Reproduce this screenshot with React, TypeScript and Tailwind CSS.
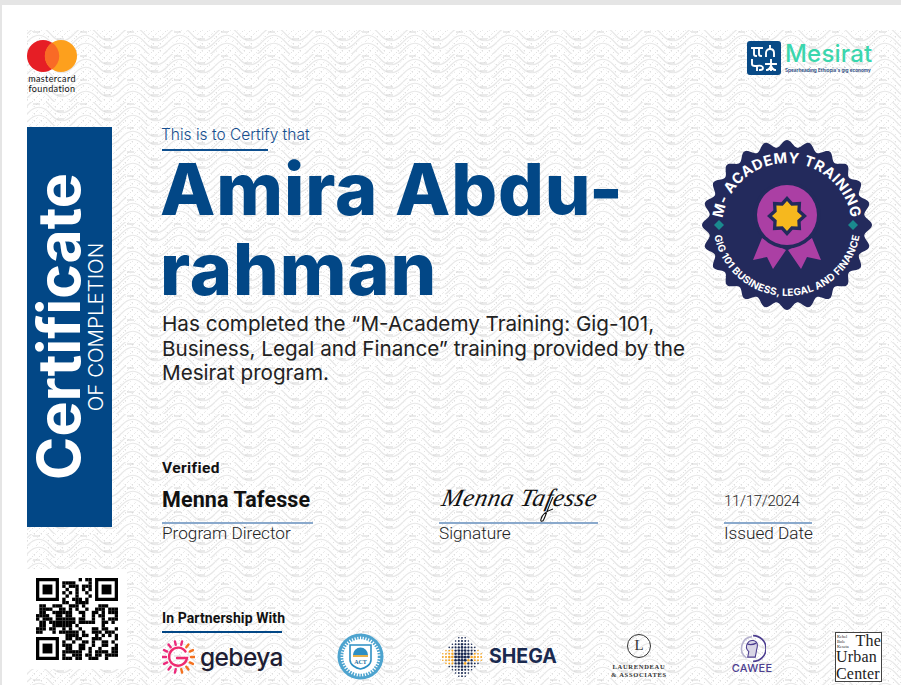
import React from "react";

const navy = "#232a5c";

function WavePattern() {
  const ys = [4, 12, 20];
  return (
    <svg className="absolute left-[25px] top-[25px]" width="874" height="655" aria-hidden="true">
      <defs>
        <pattern id="hatch" width="7" height="7" patternUnits="userSpaceOnUse">
          <path d="M0 7L7 0" stroke="#c6c6c6" strokeWidth="0.8" strokeDasharray="1 2.5" />
          <path d="M0 0L7 7" stroke="#d8d8d8" strokeWidth="0.7" strokeDasharray="1 3" />
        </pattern>
        <pattern id="wave" width="47" height="24" patternUnits="userSpaceOnUse">
          {ys.map((y) => (
            <path key={y} d={`M0 ${y} C8 ${y - 9} 16 ${y - 9} 23.5 ${y} S39 ${y + 9} 47 ${y}`} fill="none" stroke="#fff" strokeWidth="3.2" />
          ))}
          {ys.map((y) => (
            <path key={y} d={`M0 ${y} C8 ${y - 9} 16 ${y - 9} 23.5 ${y} S39 ${y + 9} 47 ${y}`} fill="none" stroke="#e8e8e8" strokeWidth="1.2" />
          ))}
          <path d="M30 9h7M30 17h7M6 2h7" stroke="#d0d0d0" strokeWidth="0.9" />
        </pattern>
      </defs>
      <rect width="874" height="655" fill="url(#hatch)" />
      <rect width="874" height="655" fill="url(#wave)" />
    </svg>
  );
}

function MastercardLogo() {
  return (
    <div className="flex w-[50px] flex-col items-center">
      <svg width="50" height="32" viewBox="0 0 50 32">
        <circle cx="16" cy="16" r="16" fill="#e61e25" />
        <circle cx="34" cy="16" r="16" fill="#fda01d" />
        <path d="M25 2.6a16 16 0 0 1 0 26.8a16 16 0 0 1 0-26.8z" fill="#f96a26" />
      </svg>
      <div className="mt-[2px] text-center font-['Lato'] text-[9px] font-normal leading-[10px] tracking-[0.4px] text-[#111]">
        mastercard
        <br />
        foundation
      </div>
    </div>
  );
}

function MesiratLogo() {
  return (
    <div className="flex items-start gap-[4px] pt-[1px]">
      <svg width="34" height="34" viewBox="0 0 34 34">
        <rect width="34" height="34" rx="3" fill="#084a86" />
        <g fill="none" stroke="#fff" strokeWidth="1.9" strokeLinecap="square">
          <path d="M5 7h10M7 7v6c0 2 1 2 2 2M12 7v6c0 2 1 2 2 2" />
          <path d="M23 5v3M19 15v-3c0-3 2-4 4-4s4 1 4 4v3" />
          <path d="M5 19v4c0 2 2 2 3 2h2v4M10 25c3-1 6 0 6 2s-2 2-3 2" />
          <path d="M19 23h10M24 19v10M20 29c2 0 3-2 4-4M28 29c-2 0-3-2-4-4" />
        </g>
      </svg>
      <div className="flex w-[87px] flex-col">
        <span className="font-['Inter'] text-[24px] font-medium leading-[26px] tracking-[0.2px] text-[#3bd6ad]">Mesirat</span>
        <span className="whitespace-nowrap font-['Inter'] text-[4.700px] font-semibold leading-[6px] text-[#17407a]">
          Spearheading Ethiopia's gig economy
        </span>
      </div>
    </div>
  );
}

function Badge() {
  const pts: string[] = [];
  for (let i = 0; i < 480; i++) {
    const t = (i / 480) * Math.PI * 2;
    const r = 81.5 + 3.5 * Math.cos(24 * t);
    pts.push(`${(85 + r * Math.cos(t)).toFixed(2)},${(85 + r * Math.sin(t)).toFixed(2)}`);
  }
  const star = (R: number, ratio: number) => {
    const out: string[] = [];
    for (let i = 0; i < 16; i++) {
      const a = (i / 16) * Math.PI * 2 - Math.PI / 2;
      const r = i % 2 === 0 ? R : R * ratio;
      out.push(`${(85 + r * Math.cos(a)).toFixed(2)},${(76 + r * Math.sin(a)).toFixed(2)}`);
    }
    return out.join(" ");
  };
  return (
    <svg width="170" height="170" viewBox="0 0 170 170" className="shrink-0">
      <polygon points={pts.join(" ")} fill={navy} />
      <polygon points="60,98 84,110 71,129 65,117 51,120" fill="#ab3fa4" />
      <polygon points="110,98 86,110 99,129 105,117 119,120" fill="#ab3fa4" />
      <circle cx="85" cy="75" r="33.5" fill={navy} />
      <circle cx="85" cy="75" r="30" fill="#ab3fa4" />
      <polygon points={star(20, 0.74)} fill={navy} />
      <polygon points={star(15, 0.74)} fill="#f6b81e" />
      <path d="M79 85l5-5 5 5-5 5z" fill="#1a8a8e" transform="translate(-67 0)" />
      <path d="M79 85l5-5 5 5-5 5z" fill="#1a8a8e" transform="translate(67 0)" />
      <defs>
        <path id="arcTop" d="M20 88A65 65 0 1 1 150 88" />
        <path id="arcBottom" d="M11 82A74 74 0 0 0 159 82" />
      </defs>
      <text fill="#fff" fontSize="14.500" fontWeight="700" letterSpacing="0.6" className="font-['Inter']">
        <textPath href="#arcTop" startOffset="50%" textAnchor="middle">M- ACADEMY TRAINING</textPath>
      </text>
      <text fill="#fff" fontSize="10" fontWeight="700" letterSpacing="0.2" className="font-['Inter']">
        <textPath href="#arcBottom" startOffset="50%" textAnchor="middle">GIG 101 BUSINESS, LEGAL AND FINANCE</textPath>
      </text>
    </svg>
  );
}

function SignBlock({ width, top, label }: { width: string; top: React.ReactNode; label: string }) {
  return (
    <div className={`flex flex-col ${width}`}>
      <div className="relative flex h-[32px] items-end whitespace-nowrap">{top}</div>
      <div className="mt-[9px] h-[2px] w-full bg-[#8aa9cc]" />
      <div className="mt-[-1px] whitespace-nowrap text-[17.200px] font-light leading-[20px] text-[#222]">{label}</div>
    </div>
  );
}

function QrCode() {
  const n = 25;
  const cells: [number, number][] = [];
  let s = 20241117;
  const rnd = () => {
    s = (s * 1103515245 + 12345) & 0x7fffffff;
    return (s >> 12) % 100;
  };
  const inFinder = (x: number, y: number) => (x < 8 && y < 8) || (x >= n - 8 && y < 8) || (x < 8 && y >= n - 8);
  for (let y = 0; y < n; y++) {
    for (let x = 0; x < n; x++) {
      if (!inFinder(x, y) && rnd() < 56) cells.push([x, y]);
    }
  }
  const finder = (x: number, y: number) => (
    <g key={`${x}-${y}`}>
      <path d={`M${x} ${y}h7v7h-7zM${x + 1} ${y + 1}v5h5v-5z`} fillRule="evenodd" />
      <rect x={x + 2} y={y + 2} width="3" height="3" />
    </g>
  );
  return (
    <div className="flex h-[100px] w-[100px] shrink-0 items-center justify-center bg-white">
      <svg width="82" height="82" viewBox="0 0 25 25" fill="#000">
        {cells.map(([x, y]) => (
          <rect key={`${x}:${y}`} x={x} y={y} width="1.02" height="1.02" />
        ))}
        {finder(0, 0)}
        {finder(18, 0)}
        {finder(0, 18)}
      </svg>
    </div>
  );
}

function GebeyaLogo() {
  const rays = Array.from({ length: 14 }, (_, i) => (i / 14) * Math.PI * 2);
  return (
    <div className="flex w-[121px] items-center gap-[5px]">
      <svg width="33" height="34" viewBox="0 0 33 34" className="shrink-0">
        <g strokeWidth="2.4" strokeLinecap="round" fill="none">
          {rays.map((a, i) => (
            <line key={i} x1={16.5 + 12.5 * Math.cos(a)} y1={17 + 12.5 * Math.sin(a)} x2={16.5 + 16 * Math.cos(a)} y2={17 + 16 * Math.sin(a)} stroke={i < 4 || i > 11 ? "#f4711f" : "#ec2a7c"} />
          ))}
          <path d="M23.5 11.5A9 9 0 1 0 25 18H15" stroke="#ef2b70" />
        </g>
      </svg>
      <span className="font-['Inter'] text-[24.500px] font-medium leading-none tracking-[-0.6px] text-[#201d33]">gebeya</span>
    </div>
  );
}

function ActSeal() {
  return (
    <svg width="47" height="47" viewBox="0 0 47 47" className="ml-[54px] shrink-0">
      <circle cx="23.5" cy="23.5" r="23" fill="#4ea4cf" />
      <circle cx="23.5" cy="23.5" r="20" fill="#fff" />
      <circle cx="23.5" cy="23.5" r="19" fill="none" stroke="#4ea4cf" strokeWidth="3.5" strokeDasharray="1.6 1.2" />
      <circle cx="23.5" cy="23.5" r="15" fill="#fff" />
      <path d="M13 12h21v15c0 5-6 8-10.500 9C19 35 13 32 13 27z" fill="#fff" stroke="#2d8fc4" strokeWidth="1.6" />
      <path d="M16 22a7.500 7.500 0 0 1 15 0z" fill="#2d8fc4" />
      <rect x="16" y="22" width="15" height="2" fill="#e3b04b" />
      <text x="23.5" y="31" textAnchor="middle" fontSize="6" fontWeight="700" fill="#1f6f9e" className="font-['Liberation_Serif']">ACT</text>
    </svg>
  );
}

function ShegaLogo() {
  const dots: React.ReactNode[] = [];
  for (let y = -6; y <= 6; y++) {
    for (let x = -6; x <= 6; x++) {
      const d = Math.abs(x) + Math.abs(y);
      if (d > 7) continue;
      const orange = (x + y === 3 && x > 0) || (x < -2 && Math.abs(y) < 3) || (x > 3 && y > -2 && y < 2);
      dots.push(
        <circle key={`${x}_${y}`} cx={23 + x * 3.2} cy={23 + y * 3.2} r={Math.max(0.6, 1.7 - d * 0.13)} fill={orange ? "#f5a623" : "#1b2a52"} />
      );
    }
  }
  return (
    <div className="ml-[55px] flex w-[116px] items-center gap-[4px]">
      <svg width="46" height="46" viewBox="0 0 46 46" className="shrink-0">{dots}</svg>
      <span className="font-['Inter'] text-[19.500px] font-bold leading-none text-[#1a2a4f]">SHEGA</span>
    </div>
  );
}

function LaurendeauLogo() {
  return (
    <div className="ml-[56px] flex w-[56px] flex-col items-center self-start pt-[2px]">
      <div className="flex h-[24px] w-[24px] items-center justify-center rounded-full border border-[#333] font-['Liberation_Serif'] text-[15px] leading-none text-[#333]">L</div>
      <div className="mt-[5px] whitespace-nowrap text-center font-['Liberation_Serif'] text-[6.500px] font-bold leading-[8px] tracking-[0.7px] text-[#333]">
        LAURENDEAU
        <br />
        &amp; ASSOCIATES
      </div>
    </div>
  );
}

function CaweeLogo() {
  return (
    <div className="ml-[64px] flex w-[42px] flex-col items-center self-start pt-[2px]">
      <svg width="28" height="29" viewBox="0 0 26 26">
        <path d="M14 1a12 12 0 0 1 0 24" fill="none" stroke="#4c3d8f" strokeWidth="1.5" />
        <path d="M13 2a11 11 0 0 0-5 20" fill="none" stroke="#b7b3cf" strokeWidth="1.5" />
        <path d="M9 8c2-4 9-3 9 2 0 3-1 4-1 6l-1 5H9l1-5c-2-2-3-5-1-8z" fill="#d9d6e6" stroke="#4c3d8f" strokeWidth="1" />
        <path d="M9 9c3 1 6 0 8-1" fill="none" stroke="#4c3d8f" strokeWidth="1.200" />
      </svg>
      <span className="font-['Inter'] text-[11px] font-medium leading-[11px] tracking-[0.3px] text-[#4c3d8f]">CAWEE</span>
    </div>
  );
}

function UrbanCenterLogo() {
  return (
    <div className="ml-[62px] flex h-[50px] w-[47px] shrink-0 flex-col overflow-hidden border border-[#444] bg-white font-['Liberation_Serif'] text-[16px] leading-[16.500px] tracking-[0.2px] text-[#222]">
      <div className="flex items-center">
        <span className="w-[22px] pl-[1px] text-[4.300px] leading-[5px] tracking-normal">Kebel Bole Keseta</span>
        <span>The</span>
      </div>
      <span>Urban</span>
      <span>Center</span>
    </div>
  );
}

export default function App() {
  return (
    <div className="h-[685px] w-[901px] overflow-hidden bg-[#e5e5e5] pl-[2px] pt-[5px] font-['Inter']">
      <div className="relative flex h-[680px] w-[899px] flex-col bg-white pl-[25px] pr-[29px] pt-[35px]">
        <WavePattern />
        <div className="relative flex h-[52px] items-start justify-between">
          <MastercardLogo />
          <MesiratLogo />
        </div>

        <div className="relative mt-[35px] flex items-start">
          <div className="flex h-[400px] w-[85px] shrink-0 items-center justify-center bg-[#024786] text-white">
            <div className="rotate-180 text-center [writing-mode:vertical-rl]">
              <div className="font-['Inter'] text-[59px] font-bold leading-[52px]">Certificate</div>
              <div className="font-['Inter'] text-[20.500px] font-light leading-[22px]">OF COMPLETION</div>
            </div>
          </div>

          <div className="ml-[50px] flex flex-1 flex-col">
            <div className="flex">
              <div className="w-[530px]">
                <div className="ml-[-1px] text-[15.500px] font-light leading-[15px] text-[#164f90]">This is to Certify that</div>
                <div className="mt-[7px] h-[2px] w-[106px] bg-[#0d4f8f]" />
                <h1 className="ml-[-2px] mt-[-2px] font-['Inter'] text-[72px] font-extrabold leading-[80px] tracking-[0.9px] text-[#024786]">
                  Amira Abdu-
                  <br />
                  rahman
                </h1>
                <p className="mt-[3px] whitespace-nowrap text-[20.650px] font-normal leading-[24.600px] text-[#222]">
                  Has completed the “M-Academy Training: Gig-101,
                  <br />
                  Business, Legal and Finance” training provided by the
                  <br />
                  Mesirat program.
                </p>
              </div>
              <div className="ml-[10px] mt-[13px]">
                <Badge />
              </div>
            </div>

            <div className="mt-[73px] font-['Roboto'] text-[15.500px] font-bold leading-[18px] tracking-[0.4px] text-[#111]">Verified</div>
            <div className="mt-[4px] flex font-['Roboto']">
              <div className="w-[277px]">
                <SignBlock width="w-[151px]" label="Program Director" top={<span className="font-['Roboto'] text-[21.500px] font-bold leading-[26px] tracking-[0.1px] text-[#111]">Menna Tafesse</span>} />
              </div>
              <div className="w-[285px]">
                <SignBlock
                  width="w-[159px]"
                  label="Signature"
                  top={
                    <>
                      <span className="inline-block origin-bottom-left -skew-x-12 font-['Liberation_Serif'] text-[25px] italic leading-[30px] tracking-[0.5px] text-[#111]">Menna Tafesse</span>
                      <svg className="absolute left-[98px] top-[14px]" width="26" height="28" viewBox="0 0 26 28" fill="none" stroke="#111" strokeWidth="1.1" aria-hidden="true">
                        <path d="M16 2C12 10 9 20 7 24c-1 3-4 3-3 0 1-4 6-8 12-10" />
                      </svg>
                    </>
                  }
                />
              </div>
              <SignBlock width="w-[88px]" label="Issued Date" top={<span className="font-['Roboto'] text-[15px] font-light leading-[24px] tracking-[-0.3px] text-[#222]">11/17/2024</span>} />
            </div>
          </div>
        </div>

        <div className="relative mt-[26px] flex">
          <QrCode />
          <div className="ml-[35px] flex flex-1 flex-col pt-[41px]">
            <div className="whitespace-nowrap font-['Roboto'] text-[14px] font-bold leading-[16px] tracking-[0.1px] text-[#111]">In Partnership With</div>
            <div className="mt-[5px] h-[2px] w-[120px] bg-[#024786]" />
            <div className="mt-[-1px] flex w-[720px] items-center">
              <GebeyaLogo />
              <ActSeal />
              <ShegaLogo />
              <LaurendeauLogo />
              <CaweeLogo />
              <UrbanCenterLogo />
            </div>
          </div>
        </div>
      </div>
    </div>
  );
}
